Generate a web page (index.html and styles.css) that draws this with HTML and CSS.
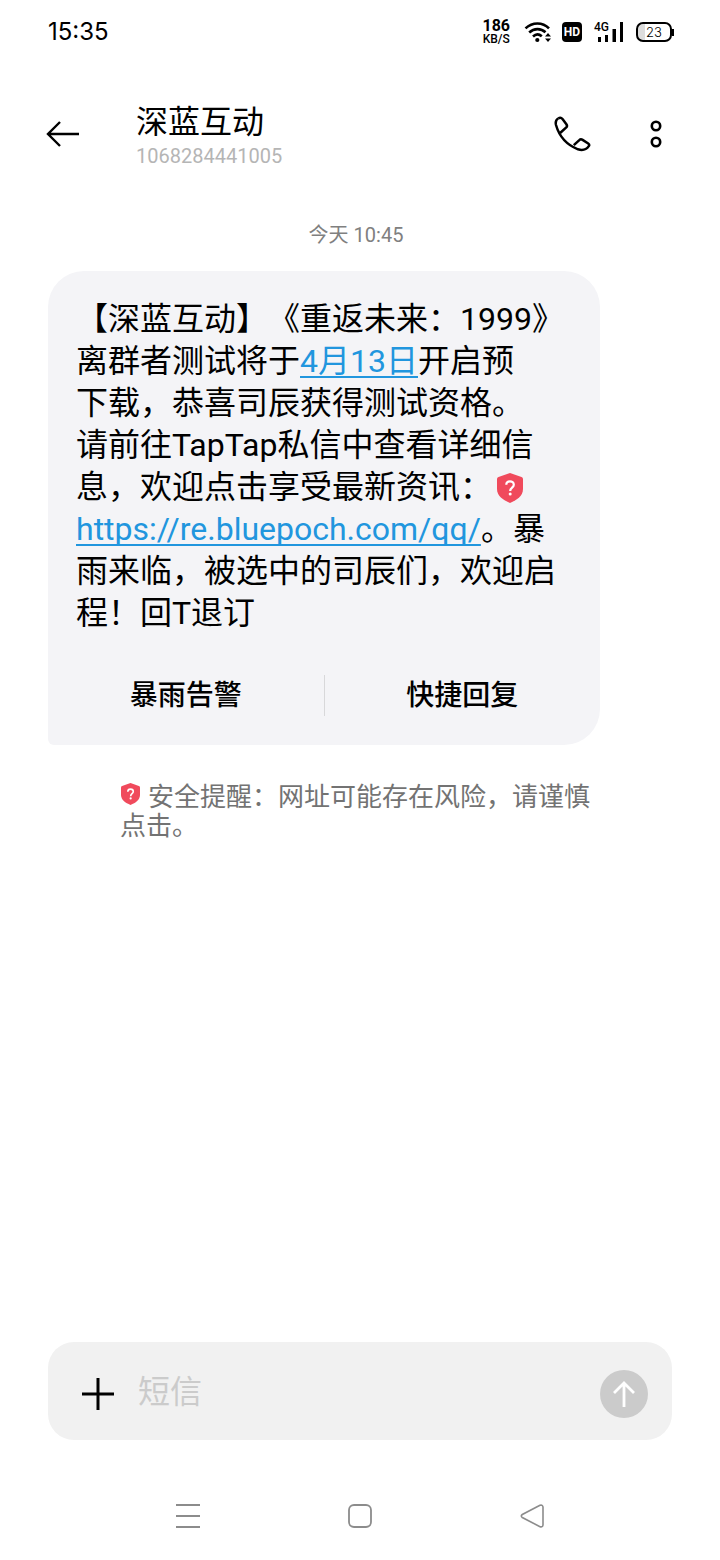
FILE: index.html
```html
<!DOCTYPE html>
<html lang="zh-CN">
<head>
<meta charset="utf-8">
<meta name="viewport" content="width=device-width, initial-scale=1">
<title>深蓝互动</title>
<link rel="stylesheet" href="styles.css">
</head>
<body>
<div class="screen">
  <div class="status">
    <span class="clock">15:35</span>
    <div class="indicators">
      <div class="speed"><span class="rate">186</span><span class="unit">KB/S</span></div>
      <svg class="wifi" width="28" height="24" viewBox="0 0 28 24" aria-hidden="true">
        <g fill="none" stroke="#000" stroke-width="2.6">
          <path d="M1.500 8.400C8.500 1.800 18.500 1.800 25 8.400"/>
          <path d="M5.200 12.500C10 8 17 8 21.500 12.300"/>
          <path d="M9 16.500C11.800 13.800 15 13.800 17.800 16.300"/>
        </g>
        <circle cx="13.300" cy="20" r="2.100"/>
        <path d="M21 16.500l3-3.500 3 3.500zM21 18.500l3 3.500 3-3.500z"/>
      </svg>
      <div class="hd">HD</div>
      <div class="signal">
        <span class="gen">4G</span>
        <svg width="30" height="22" viewBox="0 0 30 22" aria-hidden="true">
          <path d="M4 16h3v5H4zM11 14h3v7h-3zM18.500 8h3.500v13h-3.500zM26 1h3v20h-3z"/>
        </svg>
      </div>
      <div class="battery"><span class="level">23</span></div>
    </div>
  </div>

  <header class="header">
    <button class="icon-button back" aria-label="返回">
      <svg width="34" height="28" viewBox="0 0 34 28" fill="none" stroke="#000" stroke-width="2.400" aria-hidden="true">
        <path d="M33 14H2M14 2L2 14l12 12"/>
      </svg>
    </button>
    <div class="contact">
      <h1 class="name">深蓝互动</h1>
      <div class="number">1068284441005</div>
    </div>
    <button class="icon-button" aria-label="呼叫">
      <svg width="38" height="38" viewBox="0 0 38 38" fill="none" stroke="#000" stroke-width="2.500" stroke-linejoin="round" aria-hidden="true">
        <path d="M5.200 3.500C3 4.700 2.300 7 3 10c3.300 11.500 11 20 22 24.300 4.500 1.400 8.400.2 10.800-3.200.7-1 .4-1.900-.6-2.600l-5.600-3.600c-1.200-.8-2.400-.7-3.300.2l-5.500 5"/>
        <path d="M5.200 3.500c1.600-1 3.200-.8 4.300.5l3.900 5.200c.9 1.300.8 2.300-.1 3.200l-6.200 5.600"/>
      </svg>
    </button>
    <button class="icon-button more" aria-label="更多">
      <svg width="14" height="30" viewBox="0 0 14 30" fill="none" stroke="#000" stroke-width="2.600" aria-hidden="true">
        <circle cx="7" cy="7" r="4.200"/><circle cx="7" cy="23" r="4.200"/>
      </svg>
    </button>
  </header>

  <main class="thread">
    <time class="date">今天 10:45</time>
    <article class="bubble">
      <p class="message">【深蓝互动】《重返未来：1999》<br>离群者测试将于<a href="#date">4月13日</a>开启预<br>下载，恭喜司辰获得测试资格。<br>请前往TapTap私信中查看详细信<br>息，欢迎点击享受最新资讯：<svg class="risk" viewBox="0 0 26 30" aria-hidden="true"><path d="M13 0l11.500 4Q26 4.600 26 6v10c0 7-6 11-13 14C6 27 0 23 0 16V6q0-1.400 1.500-2z" fill="#f04a5c"/><path d="M9.300 11.800C9.300 9.500 11 8.300 13 8.300s3.800 1.300 3.800 3.400c0 2.900-3.600 3-3.600 6.300" fill="none" stroke="#fff" stroke-width="2.200"/><circle cx="13.200" cy="21" r="1.500" fill="#fff"/></svg><br><a href="#site">https://re.bluepoch.com/qq/</a>。暴<br>雨来临，被选中的司辰们，欢迎启<br>程！回T退订</p>
      <div class="actions">
        <button class="action">暴雨告警</button>
        <button class="action">快捷回复</button>
      </div>
    </article>
    <p class="notice"><svg class="risk-small" viewBox="0 0 26 30" aria-hidden="true"><path d="M13 0l11.500 4Q26 4.600 26 6v10c0 7-6 11-13 14C6 27 0 23 0 16V6q0-1.400 1.500-2z" fill="#f04a5c"/><path d="M9.300 11.800C9.300 9.500 11 8.300 13 8.300s3.800 1.300 3.800 3.400c0 2.900-3.600 3-3.600 6.300" fill="none" stroke="#fff" stroke-width="2.200"/><circle cx="13.200" cy="21" r="1.500" fill="#fff"/></svg>安全提醒：网址可能存在风险，请谨慎点击。</p>
  </main>

  <form class="composer">
    <button type="button" class="icon-button" aria-label="添加">
      <svg width="32" height="32" viewBox="0 0 32 32" fill="none" stroke="#000" stroke-width="3" aria-hidden="true"><path d="M16 0v32M0 16h32"/></svg>
    </button>
    <input class="field" type="text" placeholder="短信" aria-label="短信">
    <button type="button" class="send" aria-label="发送">
      <svg width="24" height="28" viewBox="0 0 24 28" fill="none" stroke="#fff" stroke-width="2.800" aria-hidden="true"><path d="M12 27V3M2 13L12 3l10 10"/></svg>
    </button>
  </form>

  <nav class="system-nav">
    <button class="icon-button" aria-label="最近任务">
      <svg width="24" height="26" viewBox="0 0 24 26" fill="none" stroke="#8c8c8c" stroke-width="2" aria-hidden="true"><path d="M0 2h24M0 13h24M0 24h24"/></svg>
    </button>
    <button class="icon-button" aria-label="主屏幕">
      <svg width="24" height="24" viewBox="0 0 24 24" fill="none" stroke="#8c8c8c" stroke-width="1.800" aria-hidden="true"><rect x="1" y="1" width="22" height="22" rx="5"/></svg>
    </button>
    <button class="icon-button" aria-label="返回上一级">
      <svg width="24" height="24" viewBox="0 0 24 24" fill="none" stroke="#8c8c8c" stroke-width="1.600" aria-hidden="true"><path d="M20 1.300L2.300 10.500q-2 1.500 0 3L20 22.700q2.700.8 3-1.700V3q-.3-2.500-3-1.700z"/></svg>
    </button>
  </nav>
</div>
</body>
</html>
```
FILE: styles.css
```css
* {
  box-sizing: border-box;
}

body {
  margin: 0;
  background: #fff;
  color: #000;
  font-family: Roboto, "Noto Sans CJK SC", sans-serif;
  text-spacing-trim: space-all;
}

button,
input {
  margin: 0;
  padding: 0;
  border: 0;
  background: none;
  color: inherit;
  font: inherit;
}

svg {
  display: block;
}

.screen {
  display: flex;
  flex-direction: column;
  min-height: 100vh;
}

.status {
  display: flex;
  align-items: center;
  justify-content: space-between;
  height: 64px;
  padding: 0 46px 0 48px;
}

.clock {
  font: 24px/32px Inter, sans-serif;
}

.indicators {
  display: flex;
  align-items: center;
  gap: 10px;
}

.speed {
  display: flex;
  flex-direction: column;
  align-items: center;
  padding-right: 4px;
  font-weight: 500;
}

.rate {
  font-size: 16px;
  font-weight: 700;
  line-height: 14px;
}

.unit {
  font-size: 12px;
  line-height: 12px;
}

.hd {
  width: 20px;
  border-radius: 4px;
  background: #000;
  color: #fff;
  font: 700 12px/20px Roboto, sans-serif;
  text-align: center;
}

.signal {
  position: relative;
  padding: 0 2px;
}

.gen {
  position: absolute;
  top: 0;
  left: 2px;
  font: 500 12px/12px Roboto, sans-serif;
}

.battery {
  display: flex;
  align-items: center;
}

.level {
  width: 36px;
  border: 2px solid #000;
  border-radius: 7px;
  background: linear-gradient(90deg, #ddd 23%, #fff 23%);
  font: 300 13px/16px Inter, sans-serif;
  text-align: center;
}

.battery::after {
  width: 2px;
  height: 7px;
  background: #000;
  content: "";
}

.header {
  display: flex;
  align-items: center;
  padding: 34px 57px 22px 46px;
}

.icon-button {
  display: block;
  flex: none;
}

.contact {
  flex: 1;
  padding: 4px 0 0 56px;
}

.name {
  margin: 0;
  font-size: 32px;
  font-weight: 400;
  line-height: 40px;
}

.number {
  color: #b5b5b5;
  font-size: 20px;
  line-height: 28px;
}

.more {
  margin-left: 58px;
}

.thread {
  display: flex;
  flex: 1;
  flex-direction: column;
  align-items: flex-start;
  padding: 29px 48px;
}

.date {
  align-self: center;
  padding-right: 8px;
  color: #808080;
  font-size: 20px;
  line-height: 28px;
}

.bubble {
  width: 100%;
  max-width: 552px;
  margin-top: 22px;
  padding: 27px 0 29px;
  border-radius: 36px 36px 36px 6px;
  background: #f4f4f7;
}

.message {
  margin: 0;
  padding: 0 24px 0 28px;
  font-size: 32px;
  line-height: 42px;
}

.message a {
  color: #2196de;
  text-decoration: underline;
  text-decoration-skip-ink: none;
  text-decoration-thickness: 2px;
  text-underline-offset: 4px;
}

.risk {
  display: inline-block;
  width: 26px;
  height: 30px;
  margin-left: 5px;
  vertical-align: -5px;
}

.actions {
  display: flex;
  margin-top: 41px;
}

.action {
  flex: 1;
  font-size: 28px;
  font-weight: 500;
  line-height: 41px;
}

.action + .action {
  border-left: 1px solid #d8d8da;
}

.notice {
  width: 100%;
  max-width: 552px;
  margin: 38px 0 0;
  padding: 0 8px 0 72px;
  color: #737373;
  font-size: 26px;
  line-height: 29px;
}

.risk-small {
  display: inline-block;
  width: 19px;
  height: 22px;
  margin: 0 8px 0 1px;
  vertical-align: 1px;
}

.composer {
  display: flex;
  align-items: center;
  height: 98px;
  margin: 0 48px 32px;
  padding: 6px 24px 0 34px;
  border-radius: 26px;
  background: #f1f1f1;
}

.field {
  flex: 1;
  min-width: 0;
  height: 48px;
  padding: 0 24px 4px;
  outline: 0;
  font-size: 32px;
}

.field::placeholder {
  color: #cbcbcb;
  opacity: 1;
}

.send {
  display: grid;
  place-items: center;
  width: 48px;
  height: 48px;
  border-radius: 50%;
  background: #cbcbcb;
}

.system-nav {
  display: flex;
  align-items: center;
  justify-content: space-between;
  height: 88px;
  padding: 0 176px;
}
```
